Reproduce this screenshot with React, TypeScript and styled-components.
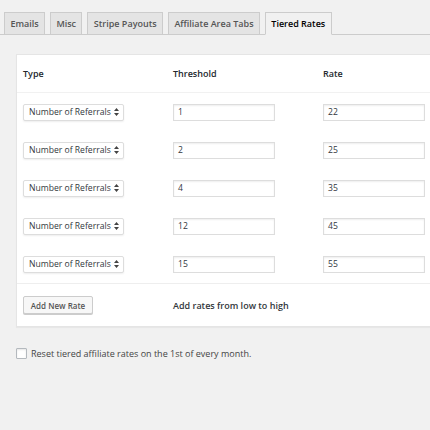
import React from "react";
import styled, { createGlobalStyle } from "styled-components";

const Global = createGlobalStyle`
  html, body { margin: 0; padding: 0; background: #f1f1f1; }
  body { font-family: "Open Sans", "Liberation Sans", sans-serif; color: #444; }
  * { box-sizing: border-box; }
`;

const Page = styled.div`
  width: 430px;
  height: 430px;
  overflow: hidden;
  background: #f1f1f1;
  padding-top: 12px;
`;

const TabBar = styled.nav`
  display: flex;
  gap: 5px;
  padding-left: 4px;
  border-bottom: 1px solid #ccc;
  height: 23px;
  width: 430px;
`;

const Tab = styled.div<{ $active?: boolean }>`
  height: 23px;
  padding: 0 5.4px;
  display: flex;
  align-items: center;
  justify-content: center;
  font-size: 9px;
  font-weight: 600;
  border: 1px solid #ccc;
  border-bottom: 1px solid ${(p) => (p.$active ? "#f1f1f1" : "#ccc")};
  background: ${(p) => (p.$active ? "#f1f1f1" : "#e4e4e4")};
  color: ${(p) => (p.$active ? "#000" : "#555")};
  margin-bottom: -1px;
  white-space: nowrap;
`;

const Panel = styled.div`
  margin: 19px 0 0 16px;
  width: 470px;
  background: #fff;
  border: 1px solid #e5e5e5;
  box-shadow: 0 1px 1px rgba(0, 0, 0, 0.04);
`;

const Row = styled.div<{ $h: number }>`
  display: grid;
  grid-template-columns: 150px 150px 150px;
  align-items: center;
  height: ${(p) => p.$h}px;
  padding-left: 6px;
  border-bottom: 1px solid #f1f1f1;
`;

const BodyRows = styled.div`
  border-bottom: 1px solid #eee;
`;

const PlainRow = styled.div`
  display: grid;
  grid-template-columns: 150px 150px 150px;
  align-items: center;
  height: 38px;
  padding-left: 6px;
`;

const HeadCell = styled.div`
  font-size: 9px;
  font-weight: 600;
  color: #23282d;
`;

const Select = styled.div`
  width: 101px;
  height: 17px;
  border: 1px solid #ddd;
  border-radius: 2px;
  box-shadow: 0 1px 2px rgba(0, 0, 0, 0.07);
  display: flex;
  align-items: center;
  justify-content: space-between;
  padding: 0 4px 0 5px;
  font-size: 8.6px;
  color: #32373c;
  background: #fff;
`;

const Input = styled.div`
  width: 102px;
  height: 17px;
  border: 1px solid #ddd;
  box-shadow: inset 0 1px 2px rgba(0, 0, 0, 0.07);
  display: flex;
  align-items: center;
  padding-left: 4px;
  font-size: 8.6px;
  color: #32373c;
  background: #fff;
`;

const Footer = styled.div`
  display: grid;
  grid-template-columns: 150px 300px;
  align-items: center;
  height: 42px;
  padding-left: 6px;
`;

const Button = styled.div`
  width: 70px;
  height: 18px;
  border: 1px solid #ccc;
  border-radius: 2px;
  background: #f7f7f7;
  box-shadow: 0 1px 0 #ccc;
  display: flex;
  align-items: center;
  justify-content: center;
  font-size: 8px;
  font-weight: 600;
  color: #555;
`;

const Hint = styled.div`
  font-size: 9px;
  font-weight: 600;
  color: #32373c;
`;

const CheckRow = styled.label`
  display: flex;
  align-items: center;
  gap: 4px;
  margin: 20px 0 0 16px;
  font-size: 9px;
  color: #444;
`;

const Box = styled.span`
  width: 11px;
  height: 11px;
  border: 1px solid #b4b9be;
  border-radius: 1px;
  background: #fff;
  box-shadow: inset 0 1px 2px rgba(0, 0, 0, 0.1);
`;

const Arrows = () => (
  <svg width="5" height="8" viewBox="0 0 5 8">
    <path d="M2.5 0 L5 3 L0 3 Z M0 5 L5 5 L2.5 8 Z" fill="#444" />
  </svg>
);

const rows = [
  ["1", "22"],
  ["2", "25"],
  ["4", "35"],
  ["12", "45"],
  ["15", "55"],
];

export default function App() {
  return (
    <Page>
      <Global />
      <TabBar>
        <Tab>Emails</Tab>
        <Tab>Misc</Tab>
        <Tab>Stripe Payouts</Tab>
        <Tab>Affiliate Area Tabs</Tab>
        <Tab $active>Tiered Rates</Tab>
      </TabBar>
      <Panel>
        <Row $h={38}>
          <HeadCell>Type</HeadCell>
          <HeadCell>Threshold</HeadCell>
          <HeadCell>Rate</HeadCell>
        </Row>
        <BodyRows>
          {rows.map(([t, r]) => (
            <PlainRow key={t}>
              <Select>
                <span>Number of Referrals</span>
                <Arrows />
              </Select>
              <Input>{t}</Input>
              <Input>{r}</Input>
            </PlainRow>
          ))}
        </BodyRows>
        <Footer>
          <Button>Add New Rate</Button>
          <Hint>Add rates from low to high</Hint>
        </Footer>
      </Panel>
      <CheckRow>
        <Box />
        <span>Reset tiered affiliate rates on the 1st of every month.</span>
      </CheckRow>
    </Page>
  );
}
